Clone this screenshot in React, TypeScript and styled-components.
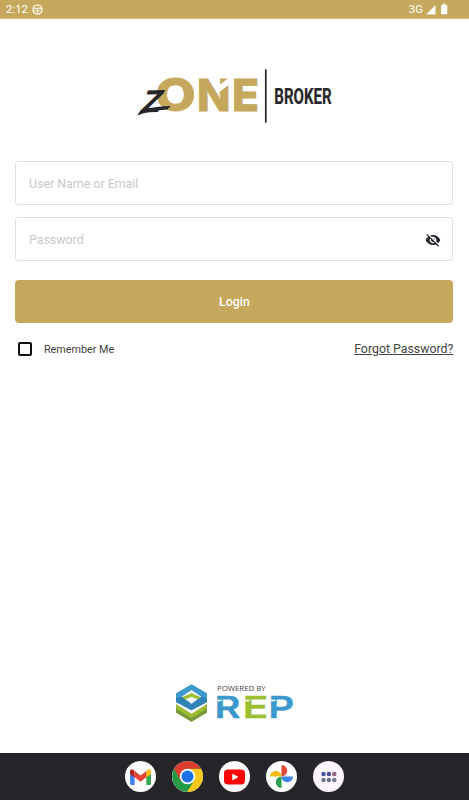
import React from "react";
import styled, { createGlobalStyle } from "styled-components";

const gold = "#c5a85c";

const GlobalStyle = createGlobalStyle`
  * { box-sizing: border-box; }
  body { margin: 0; background: #fff; font-family: Roboto, "Liberation Sans", sans-serif; }
  svg { display: block; flex: none; overflow: visible; }
`;

const Screen = styled.div`
  height: 800px;
  width: 469px;
  display: flex;
  flex-direction: column;
  background: #fff;
  overflow: hidden;
`;

const StatusBar = styled.header`
  height: 19px;
  flex: none;
  display: flex;
  justify-content: space-between;
  align-items: center;
  padding: 0 20px 0 6px;
  background: ${gold};
  border-bottom: 1px solid #d4be87;
  color: #fff;
`;

const StatusGroup = styled.div<{ $gap: number }>`
  display: flex;
  align-items: center;
  gap: ${(p) => p.$gap}px;
  font-size: 11.4px;
  line-height: 18px;
`;

const Content = styled.main`
  flex: 1;
  display: flex;
  flex-direction: column;
  padding: 46px 15.6px 30px 15.4px;
`;

const Brand = styled.div`
  height: 61px;
  display: flex;
  justify-content: center;
`;

const Form = styled.form`
  display: flex;
  flex-direction: column;
  margin-top: 35px;
`;

const Field = styled.label`
  height: 44px;
  display: flex;
  align-items: center;
  border: 1px solid #dedfe3;
  border-radius: 3px;
  padding: 1px 11px 0 12.6px;
  margin-bottom: 12px;
`;

const Input = styled.input`
  flex: 1;
  min-width: 0;
  border: 0;
  outline: 0;
  padding: 0;
  background: transparent;
  font: 400 12.4px Roboto, sans-serif;
  color: #333;
  &::placeholder { color: #c9c9c9; opacity: 1; }
`;

const LoginButton = styled.button`
  height: 43.5px;
  margin-top: 6.5px;
  border: 0;
  border-radius: 4px;
  padding: 1px 0 0;
  background: ${gold};
  color: #fff;
  font: 500 12.2px Roboto, sans-serif;
  letter-spacing: 0.1px;
`;

const Options = styled.div`
  display: flex;
  justify-content: space-between;
  align-items: center;
  height: 20px;
  margin-top: 16px;
`;

const Remember = styled.label`
  display: flex;
  align-items: center;
  gap: 12px;
  padding-left: 2.5px;
  font-size: 10.8px;
  color: #444;
`;

const Box = styled.span`
  width: 14px;
  height: 14px;
  border: 2px solid #111;
  border-radius: 2px;
`;

const Forgot = styled.a`
  font-size: 12.35px;
  line-height: 18px;
  color: #444;
  text-decoration: underline;
  text-underline-offset: 1px;
`;

const Powered = styled.footer`
  margin-top: auto;
  display: flex;
  justify-content: center;
`;

const Dock = styled.nav`
  height: 47px;
  flex: none;
  display: flex;
  justify-content: center;
  align-items: center;
  gap: 16px;
  background: #26252a;
`;

const AppIcon = styled.span<{ $tint?: string }>`
  width: 31px;
  height: 31px;
  border-radius: 50%;
  overflow: hidden;
  display: flex;
  align-items: center;
  justify-content: center;
  background: ${(p) => p.$tint ?? "#fff"};
`;

const ZoneLogo = () => (
  <svg width="200" height="61" viewBox="133.7 65 200 61" aria-label="Zone Broker">
    <g fill={gold} stroke={gold} strokeWidth=".8" fontFamily="Inter, sans-serif" fontWeight="800">
      <text x="155" y="110.6" fontSize="45" textLength="40.5" lengthAdjust="spacingAndGlyphs">O</text>
      <text x="196.8" y="110.8" fontSize="44.5" textLength="33.4" lengthAdjust="spacingAndGlyphs">N</text>
      <text x="231.8" y="110.8" fontSize="44.5" textLength="27" lengthAdjust="spacingAndGlyphs">E</text>
    </g>
    <path d="M218.3 77H229V84.4L219 92L218.3 89Z" fill="#fff" />
    <path d="M219.8 78.6H227.7L219.8 84.6Z" fill={gold} />
    <g fill="#26262a">
      <text transform="matrix(1 -.03 -.3 1 139.2 112.4)" fontFamily="Lato, sans-serif" fontWeight="700" fontSize="43" textLength="20" lengthAdjust="spacingAndGlyphs">z</text>
      <path d="M137 115.4L140.6 109.8Q157 106 170.5 106L167 109.6Q151 110.5 137 115.4Z" />
    </g>
    <path d="M265.5 69.3V122.7" stroke="#222" strokeWidth="1.7" />
    <text x="274" y="103.8" fill="#28272b" stroke="#28272b" strokeWidth=".2" fontFamily="Roboto, sans-serif" fontWeight="700" fontSize="22.8" textLength="57.3" lengthAdjust="spacingAndGlyphs">BROKER</text>
  </svg>
);

const RepLogo = () => (
  <svg width="120" height="41" viewBox="174 682 120 41" aria-label="Powered by REP">
    <path d="M176 704L191.5 713.8L207 704V712.5L191.5 721.8L176 712.5Z" fill="#9bbc31" />
    <path d="M176 708.7L191.5 718L207 708.7V712.5L191.5 721.8L176 712.5Z" fill="#77993b" />
    <path fillRule="evenodd" d="M191.5 684.2L207 693.2V702L191.5 710.3L176 702V693.2ZM191.5 690L181.8 696.8L191.5 704L201.2 696.8Z" fill="#3c99cb" />
    <path d="M176 698.5L181.8 696.8L191.5 704L201.2 696.8L207 698.5V702L191.5 710.3L176 702Z" fill="#2f82b3" />
    <path d="M182.2 697.2L191.5 692.9L200.8 697.2L197.6 699.6L191.5 696.7L185.4 699.6Z" fill="#9bbc31" />
    <text x="217" y="690.9" fill="#444" fontFamily="'Open Sans', sans-serif" fontSize="7.2" textLength="48.6" lengthAdjust="spacingAndGlyphs">POWERED BY</text>
    <g fontFamily="Inter, sans-serif" fontWeight="600" fontSize="30" fill="#3b98cc" stroke="#3b98cc" strokeWidth=".3">
      <text x="214.6" y="717.5" textLength="26" lengthAdjust="spacingAndGlyphs">R</text>
      <text x="242.4" y="717.5" fill="#9cbe30" stroke="#9cbe30" textLength="26" lengthAdjust="spacingAndGlyphs">E</text>
      <text x="268.2" y="717.5" textLength="26" lengthAdjust="spacingAndGlyphs">P</text>
    </g>
    <path d="M215.5 700.6H221.6M243.5 700.6H249.5M269.3 700.6H275.4" stroke="#fff" strokeWidth="1.5" />
  </svg>
);

const Gmail = () => (
  <svg width="21" height="16" viewBox="0 0 21 16">
    <path d="M0 3L4.7 6.5V16H1.5Q0 16 0 14.5Z" fill="#4285f4" />
    <path d="M21 3L16.3 6.5V16H19.5Q21 16 21 14.5Z" fill="#34a853" />
    <path d="M16.3 2L18 .6Q20.8-.3 21 2.3V5L16.3 8.5Z" fill="#fbbc04" />
    <path d="M0 2.3Q.3-.6 3.2.7L4.7 2V8.5L0 5Z" fill="#b8231c" />
    <path d="M4.7 2L10.5 6.4L16.3 2V8.3L10.5 12.7L4.7 8.3Z" fill="#ea4335" />
  </svg>
);

const Chrome = () => (
  <svg width="31" height="31" viewBox="0 0 32 32">
    <circle cx="16" cy="16" r="16" fill="#259b48" />
    <path d="M16 8H30A16 16 0 0 1 15.5 32L23 20Z" fill="#fdc819" />
    <path d="M2.1 8A16 16 0 0 1 29.9 8H16L9 20Z" fill="#df3c30" />
    <circle cx="16" cy="16" r="8" fill="#fff" />
    <circle cx="16" cy="16" r="6.2" fill="#1b72e6" />
  </svg>
);

const YouTube = () => (
  <svg width="21" height="16" viewBox="0 0 21 16">
    <rect y=".5" width="21" height="15" rx="4" fill="#fb0505" />
    <path d="M8.3 4.5L14.4 8L8.3 11.5Z" fill="#fff" />
  </svg>
);

const Photos = () => (
  <svg width="23" height="23" viewBox="0 0 23 23">
    <path d="M11.5 0A5.7 5.7 0 0 1 11.5 11.5Z" fill="#df4937" />
    <path d="M11.5 11.5H23A5.7 5.7 0 0 1 11.5 11.5Z" fill="#3f83ef" />
    <path d="M11.5 11.5V23A5.7 5.7 0 0 1 11.5 11.5Z" fill="#2ba14d" />
    <path d="M0 11.5A5.7 5.7 0 0 1 11.5 11.5Z" fill="#f7bb16" />
  </svg>
);

const drawerDots = ["#425199", "#494795", "#96637e", "#697389", "#656d8a", "#77758a"];

const Drawer = () => (
  <svg width="16" height="12" viewBox="0 0 16 12">
    {drawerDots.map((color, i) => (
      <circle key={i} cx={2.5 + (i % 3) * 5.4} cy={i < 3 ? 3 : 9} r="2.2" fill={color} />
    ))}
  </svg>
);

export default function App() {
  return (
    <>
      <GlobalStyle />
      <Screen>
        <StatusBar>
          <StatusGroup $gap={4}>
            <span>2:12</span>
            <svg width="11" height="11" viewBox="0 0 11 11">
              <circle cx="5.5" cy="5.5" r="4.5" fill="none" stroke="#f8f0dc" strokeWidth="1.6" />
              <path d="M1 4.4H10M2.5 6.8H8.5M5.5 5V10" stroke="#f8f0dc" strokeWidth="1.1" />
            </svg>
          </StatusGroup>
          <StatusGroup $gap={3}>
            <span>3G</span>
            <svg width="23" height="13" viewBox="0 0 23 13">
              <path d="M0 11.5L9.5 2V11.5ZM15 2.2H16.5V.7H19.5V2.2H21.3V11.3H15Z" fill="#fff" />
            </svg>
          </StatusGroup>
        </StatusBar>
        <Content>
          <Brand><ZoneLogo /></Brand>
          <Form onSubmit={(e) => e.preventDefault()}>
            <Field><Input placeholder="User Name or Email" /></Field>
            <Field>
              <Input type="password" placeholder="Password" />
              <svg width="16" height="16" viewBox="0 0 24 24" fill="#24232c">
                <path d="M12 7c2.76 0 5 2.24 5 5 0 .65-.13 1.26-.36 1.83l2.92 2.92c1.51-1.26 2.7-2.89 3.43-4.75-1.73-4.39-6-7.5-11-7.5-1.4 0-2.74.25-3.98.7l2.16 2.16C10.74 7.13 11.35 7 12 7zM2 4.27l2.28 2.28.46.46C3.08 8.3 1.78 10.02 1 12c1.73 4.39 6 7.5 11 7.5 1.55 0 3.03-.3 4.38-.84l.42.42L19.73 22 21 20.73 3.27 3 2 4.27zM7.53 9.8l1.55 1.55c-.05.21-.08.43-.08.65 0 1.66 1.34 3 3 3 .22 0 .44-.03.65-.08l1.55 1.55c-.67.33-1.41.53-2.2.53-2.76 0-5-2.24-5-5 0-.79.2-1.53.53-2.2zm4.31-.78l3.15 3.15.02-.16c0-1.66-1.34-3-3-3l-.17.01z" />
              </svg>
            </Field>
            <LoginButton>Login</LoginButton>
            <Options>
              <Remember><Box />Remember Me</Remember>
              <Forgot>Forgot Password?</Forgot>
            </Options>
          </Form>
          <Powered><RepLogo /></Powered>
        </Content>
        <Dock>
          <AppIcon><Gmail /></AppIcon>
          <AppIcon><Chrome /></AppIcon>
          <AppIcon><YouTube /></AppIcon>
          <AppIcon><Photos /></AppIcon>
          <AppIcon $tint="#fbf7fd"><Drawer /></AppIcon>
        </Dock>
      </Screen>
    </>
  );
}
